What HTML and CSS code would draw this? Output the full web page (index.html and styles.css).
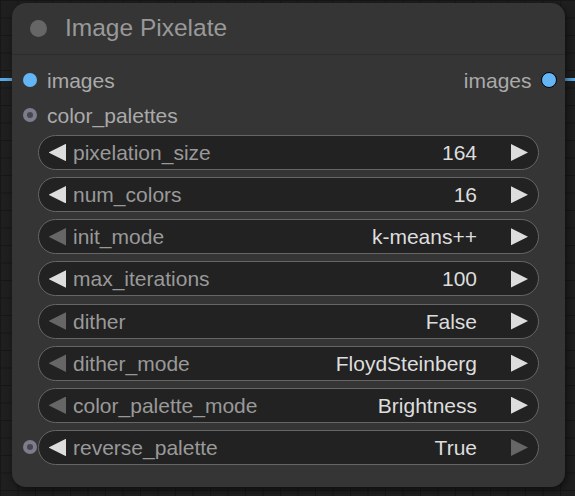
FILE: index.html
```html
<!DOCTYPE html>
<html>
<head>
<meta charset="utf-8">
<link rel="stylesheet" href="styles.css">
</head>
<body>
<div class="canvas">
  <div class="link link-in"></div>
  <div class="link link-out"></div>
  <div class="node">
    <div class="title">
      <span class="title-dot"></span>
      <span class="title-text">Image Pixelate</span>
    </div>
    <div class="slots">
      <div class="slot-row">
        <span class="dot dot-image"></span>
        <span class="slot-label">images</span>
        <span class="spacer"></span>
        <span class="slot-label">images</span>
        <span class="dot dot-image dot-out"></span>
      </div>
      <div class="slot-row">
        <span class="dot dot-ring"></span>
        <span class="slot-label">color_palettes</span>
      </div>
    </div>
    <div class="widgets">
      <div class="widget">
        <span class="arrow arrow-left"></span>
        <span class="w-label">pixelation_size</span>
        <span class="spacer"></span>
        <span class="w-value">164</span>
        <span class="arrow arrow-right"></span>
      </div>
      <div class="widget">
        <span class="arrow arrow-left"></span>
        <span class="w-label">num_colors</span>
        <span class="spacer"></span>
        <span class="w-value">16</span>
        <span class="arrow arrow-right"></span>
      </div>
      <div class="widget">
        <span class="arrow arrow-left dim"></span>
        <span class="w-label">init_mode</span>
        <span class="spacer"></span>
        <span class="w-value">k-means++</span>
        <span class="arrow arrow-right"></span>
      </div>
      <div class="widget">
        <span class="arrow arrow-left"></span>
        <span class="w-label">max_iterations</span>
        <span class="spacer"></span>
        <span class="w-value">100</span>
        <span class="arrow arrow-right"></span>
      </div>
      <div class="widget">
        <span class="arrow arrow-left dim"></span>
        <span class="w-label">dither</span>
        <span class="spacer"></span>
        <span class="w-value">False</span>
        <span class="arrow arrow-right"></span>
      </div>
      <div class="widget">
        <span class="arrow arrow-left dim"></span>
        <span class="w-label">dither_mode</span>
        <span class="spacer"></span>
        <span class="w-value">FloydSteinberg</span>
        <span class="arrow arrow-right"></span>
      </div>
      <div class="widget">
        <span class="arrow arrow-left dim"></span>
        <span class="w-label">color_palette_mode</span>
        <span class="spacer"></span>
        <span class="w-value">Brightness</span>
        <span class="arrow arrow-right"></span>
      </div>
      <div class="widget">
        <span class="dot dot-ring widget-input"></span>
        <span class="arrow arrow-left"></span>
        <span class="w-label">reverse_palette</span>
        <span class="spacer"></span>
        <span class="w-value">True</span>
        <span class="arrow arrow-right dim"></span>
      </div>
    </div>
  </div>
</div>
</body>
</html>
```

FILE: styles.css
```css
* { box-sizing: border-box; }
html, body {
  margin: 0;
  padding: 0;
  width: 575px;
  height: 496px;
  overflow: hidden;
}
body {
  background-color: #1f1f1f;
  background-image:
    linear-gradient(to right, #171717 1px, transparent 1px),
    linear-gradient(to bottom, #171717 1px, transparent 1px);
  background-size: 17.5px 17.5px;
  font-family: "Liberation Sans", Arial, sans-serif;
}
.canvas {
  position: relative;
  width: 575px;
  height: 496px;
  padding: 2.5px 0 0 12px;
}
.link {
  position: absolute;
  height: 3px;
  background: #5aa8e4;
  top: 78px;
}
.link-in { left: 0; width: 14px; }
.link-out { left: 560px; width: 15px; }
.node {
  position: relative;
  width: 553px;
  height: 484px;
  background: #353535;
  border-radius: 14px;
  box-shadow: 2px 3px 8px rgba(0, 0, 0, 0.55);
  display: flex;
  flex-direction: column;
}
.title {
  height: 52.5px;
  display: flex;
  align-items: center;
  border-bottom: 1px solid #2c2c2c;
  padding-left: 17.5px;
}
.title-dot {
  width: 17px;
  height: 17px;
  border-radius: 50%;
  background: #666;
}
.title-text {
  margin-left: 18.5px;
  font-size: 24.5px;
  color: #999;
  line-height: 52.5px;
}
.slots {
  padding-top: 7.5px;
  display: flex;
  flex-direction: column;
}
.slot-row {
  height: 35px;
  display: flex;
  align-items: center;
  padding: 0 8.5px 0 10.5px;
}
.slot-label {
  font-size: 21px;
  color: #aaa;
  line-height: 35px;
}
.spacer { flex: 1; }
.dot {
  width: 14px;
  height: 14px;
  border-radius: 50%;
  flex: none;
}
.dot-image {
  background: #64b5f6;
  margin-right: 10.5px;
}
.dot-out {
  width: 16px;
  height: 16px;
  margin: 0 0 0 9px;
  border: 1.5px solid #000;
}
.dot-ring {
  background: #46464f;
  border: 4.5px solid #7c7c8c;
  margin-right: 10.5px;
}
.widgets {
  margin-top: 2.5px;
  padding: 0 26.5px 0 26px;
  display: flex;
  flex-direction: column;
  gap: 7.15px;
}
.widget {
  position: relative;
  height: 35px;
  display: flex;
  align-items: center;
  background: #222;
  border: 1px solid #666;
  border-radius: 17.5px;
  padding: 0 9.5px;
}
.widget-input {
  position: absolute;
  left: -16px;
  top: 9.5px;
  margin: 0;
}
.arrow {
  width: 17.5px;
  height: 17.5px;
  flex: none;
  background: #ddd;
}
.arrow.dim { background: #666; }
.arrow-left { clip-path: polygon(100% 0, 0 50%, 100% 100%); }
.arrow-right {
  clip-path: polygon(0 0, 100% 50%, 0 100%);
  margin-left: 33.5px;
}
.w-label {
  margin-left: 7px;
  font-size: 21px;
  color: #999;
  line-height: 33px;
  white-space: nowrap;
}
.w-value {
  font-size: 21px;
  color: #ddd;
  line-height: 33px;
  white-space: nowrap;
}
```
